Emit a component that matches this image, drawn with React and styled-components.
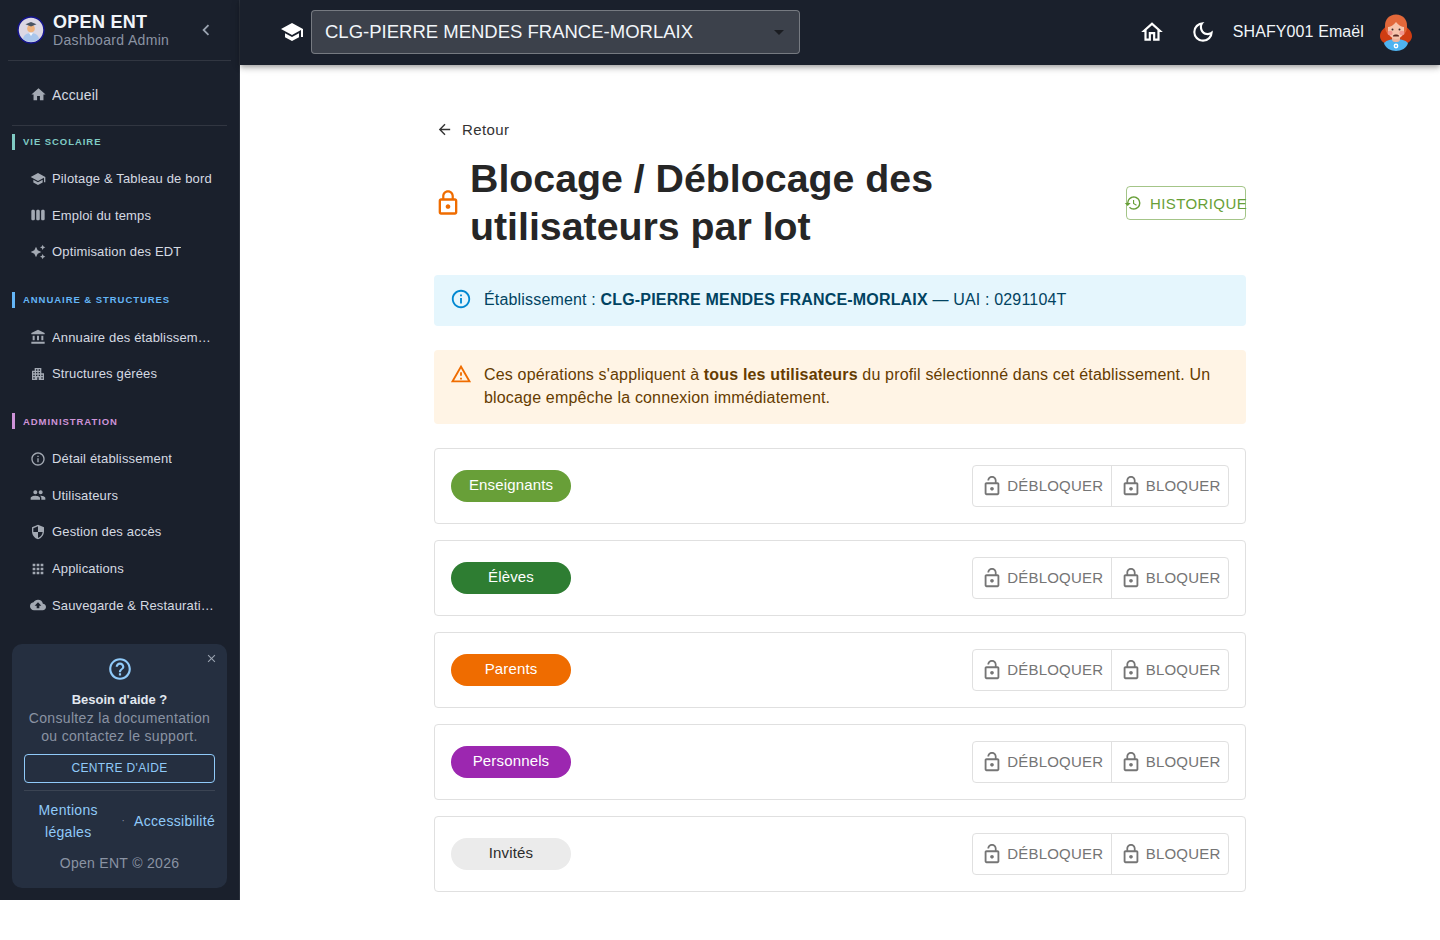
import React from "react"
import styled, {createGlobalStyle} from "styled-components"
import {
  MdHome, MdSchool, MdViewWeek, MdAutoAwesome, MdAccountBalance, MdApartment, MdInfoOutline,
  MdPeople, MdSecurity, MdApps, MdCloudUpload, MdChevronLeft, MdClose, MdHelpOutline,
  MdArrowDropDown, MdOutlineHome, MdOutlineDarkMode, MdArrowBack, MdLockOutline,
  MdLockOpen, MdHistory, MdOutlineWarningAmber
} from "react-icons/md"

const GlobalStyle = createGlobalStyle`
  html, body { margin: 0; padding: 0; background: #fff; }
  body { font-family: "Liberation Sans", Arial, sans-serif; color: rgba(0,0,0,0.87); }
  * { box-sizing: border-box; }
`

const Page = styled.div`
  display: flex;
  height: 900px;
  overflow: hidden;
`

const Sidebar = styled.aside`
  flex: 0 0 240px;
  width: 240px;
  min-width: 0;
  height: 900px;
  display: flex;
  flex-direction: column;
  background: #1a202c;
  border-right: 1px solid rgba(255,255,255,0.08);
  color: #e2e8f0;
`

const Brand = styled.div`
  display: flex;
  align-items: center;
  flex: 0 0 61px;
  margin: 0 8px;
  padding: 0 14px 0 9px;
  border-bottom: 1px solid rgba(255,255,255,0.1);
`

const BrandText = styled.div`
  flex: 1;
  margin-left: 8px;
`

const BrandName = styled.div`
  font-size: 18px;
  font-weight: 700;
  line-height: 20px;
  letter-spacing: 0.3px;
  color: #f1f5f9;
`

const BrandSub = styled.div`
  font-size: 14px;
  line-height: 16px;
  letter-spacing: 0.33px;
  color: #8a93a3;
`

const Collapse = styled(MdChevronLeft)`
  font-size: 22px;
  color: #9aa3b0;
`

const HomeBlock = styled.div`
  margin: 0 12px;
  padding: 15px 0 12px;
  border-bottom: 1px solid rgba(255,255,255,0.1);
`

const Section = styled.section`
  padding-top: ${props => props.$top}px;
`

const SectionLabel = styled.div`
  display: flex;
  align-items: center;
  height: 16px;
  margin: 0 0 11px 12px;
  padding-left: 8px;
  border-left: 3px solid ${props => props.$color};
  color: ${props => props.$color};
  font-size: 9.5px;
  font-weight: 700;
  letter-spacing: 0.95px;
  text-transform: uppercase;
`

const NavItem = styled.div`
  display: flex;
  align-items: center;
  height: ${props => props.$big ? 37 : 36.6}px;
  padding: 0 ${props => props.$big ? 12 : 24}px 0 ${props => props.$big ? 18 : 30}px;
  font-size: ${props => props.$big ? 14 : 13}px;
  letter-spacing: 0.15px;
  color: #d5dae2;

  svg {
    flex: 0 0 ${props => props.$big ? 17 : 16}px;
    font-size: ${props => props.$big ? 17 : 16}px;
    margin-right: ${props => props.$big ? 5 : 6}px;
    color: #a3a9b3;
  }

  span {
    min-width: 0;
    overflow: hidden;
    white-space: nowrap;
    text-overflow: ellipsis;
  }
`

const HelpCard = styled.div`
  position: relative;
  margin: 20.500px 12px 0;
  padding: 12px 12px 15px;
  background: #252f40;
  border-radius: 10px;
  text-align: center;
`

const HelpClose = styled(MdClose)`
  position: absolute;
  top: 8px;
  right: 9px;
  font-size: 13px;
  color: #9aa3b0;
`

const HelpIcon = styled(MdHelpOutline)`
  display: block;
  margin: 0 auto 8px;
  font-size: 26px;
  color: #90caf9;
`

const HelpTitle = styled.div`
  font-size: 13px;
  font-weight: 700;
  line-height: 20px;
  color: #e2e8f0;
`

const HelpBody = styled.div`
  margin-top: -1px;
  font-size: 14px;
  line-height: 18px;
  letter-spacing: 0.33px;
  color: #8a93a3;
`

const HelpButton = styled.div`
  margin-top: 9px;
  height: 29px;
  line-height: 26px;
  border: 1px solid #90caf9;
  border-radius: 4px;
  font-size: 12px;
  letter-spacing: 0.35px;
  color: #90caf9;
`

const HelpLinks = styled.div`
  display: flex;
  align-items: center;
  margin-top: 7px;
  padding-top: 8px;
  border-top: 1px solid rgba(255,255,255,0.1);
  font-size: 14px;
  line-height: 22px;
  letter-spacing: 0.3px;
  color: #90caf9;
`

const MentionLink = styled.div`
  flex: 1;
`

const Dot = styled.span`
  margin: 0 9px;
  font-size: 10px;
  color: #8a93a3;
`

const HelpCopy = styled.div`
  margin-top: 10px;
  font-size: 14px;
  line-height: 20px;
  letter-spacing: 0.3px;
  color: #8a93a3;
`

const Content = styled.div`
  flex: 1;
  min-width: 0;
  display: flex;
  flex-direction: column;
`

const Header = styled.header`
  display: flex;
  align-items: center;
  flex: 0 0 65px;
  padding: 0 24px 1px 40px;
  background: #1a202c;
  color: #fff;
  box-shadow: 0 2px 4px -1px rgba(0,0,0,0.2), 0 4px 5px rgba(0,0,0,0.14), 0 1px 10px rgba(0,0,0,0.12);
`

const SchoolIcon = styled(MdSchool)`
  font-size: 24px;
  margin-right: 7px;
`

const SelectBox = styled.div`
  display: flex;
  align-items: center;
  justify-content: space-between;
  width: 489px;
  height: 44px;
  padding: 0 8px 0 13px;
  background: rgba(255,255,255,0.15);
  border: 1px solid rgba(255,255,255,0.3);
  border-radius: 4px;
  font-size: 18.5px;
  color: #f1f5f9;

  svg {
    font-size: 24px;
    color: rgba(0,0,0,0.54);
  }
`

const HeaderRight = styled.div`
  display: flex;
  align-items: center;
  margin-left: auto;
`

const HeaderIcon = styled.div`
  display: flex;
  margin-right: ${props => props.$gap}px;
  font-size: 26px;
  color: #fff;
`

const UserName = styled.div`
  margin-right: 12px;
  font-size: 16px;
  letter-spacing: 0.1px;
  color: #f1f5f9;
`

const Main = styled.main`
  width: 812px;
  margin: 0 auto;
  padding-top: 54px;
`

const BackLink = styled.div`
  display: flex;
  align-items: center;
  height: 20px;
  margin-left: 2px;
  font-size: 15px;
  letter-spacing: 0.4px;
  color: #333;

  svg {
    font-size: 17px;
    margin-right: 9px;
  }
`

const TitleRow = styled.div`
  display: flex;
  align-items: center;
  margin-top: 15px;
`

const TitleLock = styled(MdLockOutline)`
  flex: 0 0 28px;
  font-size: 28px;
  color: #ef6c00;
  margin: 1px 8px 0 0;
`

const Title = styled.h1`
  flex: 1;
  margin: 0;
  font-size: 39.3px;
  font-weight: 700;
  line-height: 48px;
  color: #262626;
  max-width: 520px;
`

const HistoryButton = styled.div`
  display: flex;
  align-items: center;
  width: 120px;
  height: 34px;
  margin: 2px 0 0 auto;
  border: 1px solid rgba(104,159,56,0.6);
  border-radius: 4px;
  font-size: 15px;
  letter-spacing: 0.4px;
  color: #689f38;
  white-space: nowrap;

  svg {
    flex: 0 0 18px;
    font-size: 18px;
    margin: 0 8px 0 -3px;
  }
`

const Alert = styled.div`
  display: flex;
  margin-top: ${props => props.$top}px;
  padding: 13px 16px 15px;
  background: ${props => props.$bg};
  border-radius: 4px;
  font-size: 16px;
  line-height: 23px;
  letter-spacing: 0.17px;
  color: ${props => props.$color};

  svg {
    flex: 0 0 22px;
    font-size: 22px;
    margin-right: 12px;
    color: ${props => props.$icon};
  }
`

const ProfileList = styled.div`
  display: flex;
  flex-direction: column;
  gap: 16px;
  margin-top: 24px;
`

const ProfileCard = styled.div`
  display: flex;
  align-items: center;
  justify-content: space-between;
  height: 76px;
  padding: 0 16px;
  background: #fff;
  border: 1px solid #e0e0e0;
  border-radius: 4px;
`

const Chip = styled.div`
  width: 120px;
  height: 32px;
  border-radius: 16px;
  background: ${props => props.$bg};
  color: ${props => props.$color};
  font-size: 15px;
  letter-spacing: 0.15px;
  line-height: 30px;
  text-align: center;
`

const ButtonGroup = styled.div`
  display: flex;
  height: 42px;
  border: 1px solid #e0e0e0;
  border-radius: 4px;
`

const ActionButton = styled.div`
  display: flex;
  align-items: center;
  padding: 0 7.5px 1px 8px;
  font-size: 15px;
  letter-spacing: 0.2px;
  color: #757575;

  & + & {
    border-left: 1px solid #e0e0e0;
  }

  svg {
    font-size: 22px;
    margin-right: 4px;
  }
`

const NAV = [
  {
    label: "Vie scolaire",
    color: "#80cbc4",
    top: 7.5,
    items: [
      [MdSchool, "Pilotage & Tableau de bord"],
      [MdViewWeek, "Emploi du temps"],
      [MdAutoAwesome, "Optimisation des EDT"]
    ]
  },
  {
    label: "Annuaire & structures",
    color: "#64b5f6",
    top: 21.5,
    items: [
      [MdAccountBalance, "Annuaire des établissements"],
      [MdApartment, "Structures gérées"]
    ]
  },
  {
    label: "Administration",
    color: "#ce93d8",
    top: 21.5,
    items: [
      [MdInfoOutline, "Détail établissement"],
      [MdPeople, "Utilisateurs"],
      [MdSecurity, "Gestion des accès"],
      [MdApps, "Applications"],
      [MdCloudUpload, "Sauvegarde & Restauration"]
    ]
  }
]

const PROFILES = [
  {name: "Enseignants", bg: "#689f38", color: "#fff"},
  {name: "Élèves", bg: "#2e7d32", color: "#fff"},
  {name: "Parents", bg: "#ef6c00", color: "#fff"},
  {name: "Personnels", bg: "#9c27b0", color: "#fff"},
  {name: "Invités", bg: "#ebebeb", color: "#2b2b2b"}
]

const BrandLogo = () => (
  <svg width="28" height="28" viewBox="0 0 28 28">
    <circle cx="14" cy="14" r="13" fill="#dcd8e4" stroke="#14148c" strokeWidth="1.5" />
    <path d="M6 23c.5-4 4-6 8-6s7.500 2 8 6a12.500 12.500 0 0 1-16 0z" fill="#a9c6ec" />
    <circle cx="14" cy="12.500" r="3.800" fill="#eeb27e" />
    <path d="M8.500 8.200L14 6l5.500 2.200L14 10.400z" fill="#4a5563" />
    <path d="M12 17h4l-2 3z" fill="#f4f6fb" />
  </svg>
)

const UserAvatar = () => (
  <svg width="40" height="40" viewBox="0 0 40 40">
    <path d="M11 12c-1 4-7 6-7 12 0 4 3 7 7 8h18c4-1 7-4 7-8 0-6-6-8-7-12z" fill="#cf3d12" />
    <path d="M8 31c3-3 7-4 12-4s9 1 12 4c-1 5-7 8-12 8s-11-3-12-8z" fill="#4fb3f0" />
    <rect x="16" y="23" width="8" height="7" rx="3" fill="#eeb49c" />
    <path d="M20 2.500c-7 0-11 5-11 11 0 3 .5 5 1.500 7h19c1-2 1.500-4 1.500-7 0-6-4-11-11-11z" fill="#e2683a" />
    <path d="M12 15c2 0 6-2 8-5 2 3 6 5 8 5v4c0 4-4 8-8 8s-8-4-8-8z" fill="#f6c4ac" />
    <ellipse cx="14" cy="21" rx="2.600" ry="2.200" fill="#f2958c" />
    <ellipse cx="26" cy="21" rx="2.600" ry="2.200" fill="#f2958c" />
    <circle cx="16.500" cy="17.500" r="1" fill="#3b2a26" />
    <circle cx="23.500" cy="17.500" r="1" fill="#3b2a26" />
    <path d="M17 23.500c1-1.500 5-1.500 6 0v1h-6z" fill="#5a2a22" />
    <circle cx="20" cy="34" r="2.400" fill="#fff" />
    <circle cx="20" cy="34" r="1" fill="#4fb3f0" />
  </svg>
)

const App = () => (
  <Page>
    <GlobalStyle />
    <Sidebar>
      <Brand>
        <BrandLogo />
        <BrandText>
          <BrandName>OPEN ENT</BrandName>
          <BrandSub>Dashboard Admin</BrandSub>
        </BrandText>
        <Collapse />
      </Brand>
      <HomeBlock>
        <NavItem $big>
          <MdHome />
          <span>Accueil</span>
        </NavItem>
      </HomeBlock>
      {NAV.map(section => (
        <Section key={section.label} $top={section.top}>
          <SectionLabel $color={section.color}>{section.label}</SectionLabel>
          {section.items.map(([Icon, text]) => (
            <NavItem key={text}>
              <Icon />
              <span>{text}</span>
            </NavItem>
          ))}
        </Section>
      ))}
      <HelpCard>
        <HelpClose />
        <HelpIcon />
        <HelpTitle>Besoin d'aide ?</HelpTitle>
        <HelpBody>
          Consultez la documentation
          <br />
          ou contactez le support.
        </HelpBody>
        <HelpButton>CENTRE D'AIDE</HelpButton>
        <HelpLinks>
          <MentionLink>
            Mentions
            <br />
            légales
          </MentionLink>
          <Dot>·</Dot>
          <div>Accessibilité</div>
        </HelpLinks>
        <HelpCopy>Open ENT © 2026</HelpCopy>
      </HelpCard>
    </Sidebar>
    <Content>
      <Header>
        <SchoolIcon />
        <SelectBox>
          CLG-PIERRE MENDES FRANCE-MORLAIX
          <MdArrowDropDown />
        </SelectBox>
        <HeaderRight>
          <HeaderIcon $gap={25}>
            <MdOutlineHome />
          </HeaderIcon>
          <HeaderIcon $gap={17}>
            <MdOutlineDarkMode />
          </HeaderIcon>
          <UserName>SHAFY001 Emaël</UserName>
          <UserAvatar />
        </HeaderRight>
      </Header>
      <Main>
        <BackLink>
          <MdArrowBack />
          Retour
        </BackLink>
        <TitleRow>
          <TitleLock />
          <Title>Blocage / Déblocage des utilisateurs par lot</Title>
          <HistoryButton>
            <MdHistory />
            HISTORIQUE
          </HistoryButton>
        </TitleRow>
        <Alert $top={25} $bg="#e5f6fd" $color="#014361" $icon="#0288d1">
          <MdInfoOutline />
          <div>
            Établissement : <b>CLG-PIERRE MENDES FRANCE-MORLAIX</b> — UAI : 0291104T
          </div>
        </Alert>
        <Alert $top={24} $bg="#fff4e5" $color="#663c00" $icon="#ef6c00">
          <MdOutlineWarningAmber />
          <div>
            Ces opérations s'appliquent à <b>tous les utilisateurs</b> du profil sélectionné dans
            cet établissement. Un blocage empêche la connexion immédiatement.
          </div>
        </Alert>
        <ProfileList>
          {PROFILES.map(profile => (
            <ProfileCard key={profile.name}>
              <Chip $bg={profile.bg} $color={profile.color}>
                {profile.name}
              </Chip>
              <ButtonGroup>
                <ActionButton>
                  <MdLockOpen />
                  DÉBLOQUER
                </ActionButton>
                <ActionButton>
                  <MdLockOutline />
                  BLOQUER
                </ActionButton>
              </ButtonGroup>
            </ProfileCard>
          ))}
        </ProfileList>
      </Main>
    </Content>
  </Page>
)

export default App
